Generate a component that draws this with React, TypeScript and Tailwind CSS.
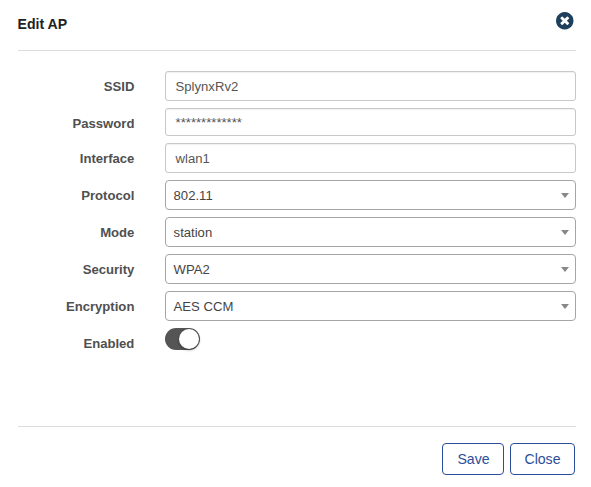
import type { ReactNode } from "react";

function Row({ label, className = "h-[30px]", labelClass = "pt-px", children }: { label: string; className?: string; labelClass?: string; children: ReactNode }) {
  return (
    <div className={`flex items-center ${className}`}>
      <label className={`w-[116.4px] text-right text-[13.12px] leading-5 font-bold text-[#505050] ${labelClass}`}>{label}</label>
      <div className="ml-[30.6px] flex h-full flex-1">{children}</div>
    </div>
  );
}

function TextBox({ value }: { value: string }) {
  return (
    <div className="flex h-full w-full items-center rounded-[3px] border border-[#c8c8c8] pt-px pl-[9.6px] text-[13.12px] leading-5 text-[#555] shadow-[inset_0_1px_1px_rgba(0,0,0,0.06)]">
      {value}
    </div>
  );
}

function SelectBox({ value }: { value: string }) {
  return (
    <div className="flex h-full w-full items-center justify-between rounded-[4px] border border-[#a5a5a5] pr-[6px] pl-[7.6px] text-[13.12px] leading-5 text-[#444]">
      <span className="pt-px">{value}</span>
      <span className="mt-px h-0 w-0 border-x-4 border-t-5 border-x-transparent border-t-[#888]" />
    </div>
  );
}

const selects = [
  ["Protocol", "802.11"],
  ["Mode", "station"],
  ["Security", "WPA2"],
  ["Encryption", "AES CCM"],
];

export default function App() {
  return (
    <div className="flex h-[487px] w-[591px] flex-col bg-white pr-[15px] pl-[18px] font-['Liberation_Sans',Arial,sans-serif]">
      <header className="flex h-[51px] shrink-0 items-start justify-between border-b border-[#dddddd]">
        <h1 className="-ml-[0.5px] pt-[14px] text-[14.12px] leading-5 font-bold text-[#222]">Edit AP</h1>
        <button aria-label="Close dialog" className="mt-3 mr-[2.5px]">
          <svg className="block h-[17.5px] w-[17.5px]" viewBox="0 128 1536 1536" fill="#1f405c">
            <path d="M1149 1122q0-26-19-45L949 896l181-181q19-19 19-45 0-27-19-46l-90-90q-19-19-46-19-26 0-45 19L768 715 587 534q-19-19-45-19-27 0-46 19l-90 90q-19 19-19 46 0 26 19 45l181 181-181 181q-19 19-19 45 0 27 19 46l90 90q19 19 46 19 26 0 45-19l181-181 181 181q19 19 45 19 27 0 46-19l90-90q19-19 19-46zm387-226q0 209-103 385.500t-279.500 279.500-385.500 103-385.500-103-279.500-279.500-103-385.500 103-385.500 279.500-279.500 385.500-103 385.500 103 279.500 279.500 103 385.500z" />
          </svg>
        </button>
      </header>

      <main className="flex flex-1 flex-col gap-[7px] pt-5">
        <Row label="SSID"><TextBox value="SplynxRv2" /></Row>
        <Row label="Password" className="h-7" labelClass="pt-[3px]"><TextBox value="*************" /></Row>
        <Row label="Interface"><TextBox value="wlan1" /></Row>
        {selects.map(([label, value]) => (
          <Row key={label} label={label}><SelectBox value={value} /></Row>
        ))}
        <Row label="Enabled">
          <button role="switch" aria-checked="true" aria-label="Enabled" className="flex h-[22px] w-[35px] justify-end rounded-full bg-[#555] p-px">
            <span className="h-5 w-5 rounded-full bg-white shadow-[0_1px_3px_rgba(0,0,0,0.4)]" />
          </button>
        </Row>
      </main>

      <footer className="flex h-[61px] shrink-0 justify-end gap-[6px] border-t border-[#dddddd] pt-4 pr-px text-[14.1px] leading-5 text-[#2c4d9b]">
        <button className="h-8 w-[62px] rounded-[4px] border border-[#2c4d9b] pl-px">Save</button>
        <button className="h-8 w-[65px] rounded-[4px] border border-[#2c4d9b]">Close</button>
      </footer>
    </div>
  );
}
